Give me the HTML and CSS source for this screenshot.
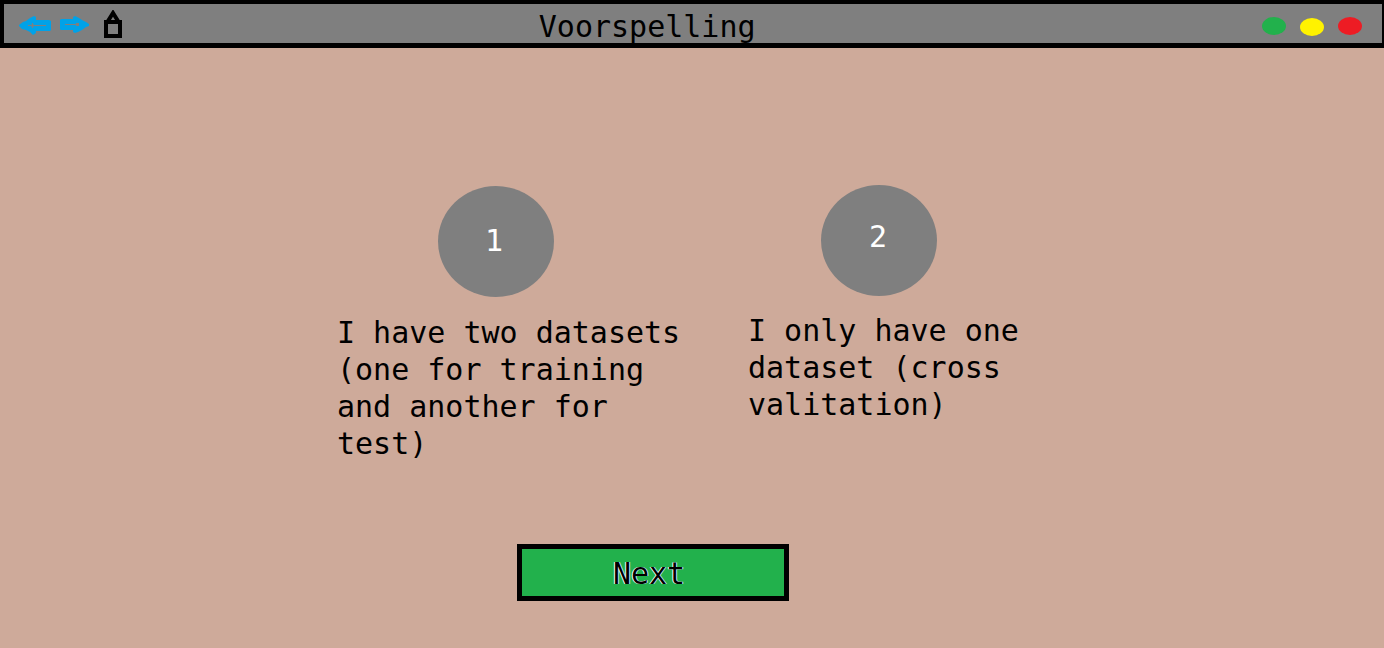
FILE: index.html
```html
<!DOCTYPE html>
<html lang="en">
<head>
<meta charset="utf-8">
<meta name="viewport" content="width=device-width, initial-scale=1">
<title>Voorspelling</title>
<link rel="stylesheet" href="styles.css">
</head>
<body>
<header class="titlebar">
  <nav class="nav">
    <button class="icon-button" type="button" aria-label="Back">
      <svg width="33" height="30" viewBox="0 0 33 30" aria-hidden="true">
        <path d="M0 15 L4 12 L7 11 L11 8 L15 6 L17 7 V10 H30 L32 11 V20 L31 21 H17 V23 L14 25 L11 22 L7 20 L3 19 L0 16Z" fill="#00a2e8"/>
        <path d="M9 15.500H27M13.500 13V18" stroke="#7f7f7f" fill="none"/>
        <path d="M11 15.500L13.500 14L16 15.500L13.500 17Z" fill="#7f7f7f"/>
      </svg>
    </button>
    <button class="icon-button" type="button" aria-label="Forward">
      <svg width="30" height="30" viewBox="0 0 30 30" aria-hidden="true">
        <path d="M1 9 H13 V7 L15 6 L19 8 L22 10 L26 12 L29 14 V16 L26 17 L22 20 L18 22 L15 23 L13 22 V20 H1 L0 19 V10Z" fill="#00a2e8"/>
        <path d="M5 14.500H17" stroke="#7f7f7f"/>
        <rect x="16" y="13" width="3" height="3" fill="#7f7f7f"/>
      </svg>
    </button>
    <button class="icon-button home" type="button" aria-label="Home">
      <svg width="18" height="30" viewBox="0 0 18 30" aria-hidden="true">
        <path d="M2 12H16V26H2Z" fill="none" stroke="#000" stroke-width="4"/>
        <path d="M4 11L9 3L14 11" fill="none" stroke="#000" stroke-width="4"/>
      </svg>
    </button>
  </nav>
  <h1 class="title">Voorspelling</h1>
  <div class="window-controls">
    <button class="dot dot-green" type="button" aria-label="Minimize"></button>
    <button class="dot dot-yellow" type="button" aria-label="Maximize"></button>
    <button class="dot dot-red" type="button" aria-label="Close"></button>
  </div>
</header>
<main class="content">
  <div class="options">
    <section class="option option-two-sets">
      <button class="circle" type="button" aria-describedby="two-sets">1</button>
      <p class="description" id="two-sets">I have two datasets (one for training and another for test)</p>
    </section>
    <section class="option option-one-set">
      <button class="circle" type="button" aria-describedby="one-set">2</button>
      <p class="description" id="one-set">I only have one dataset (cross valitation)</p>
    </section>
  </div>
  <button class="next" type="button">Next</button>
</main>
</body>
</html>
```
FILE: styles.css
```css
* {
  box-sizing: border-box;
}

body {
  margin: 0;
  min-height: 100vh;
  background: #ceaa9a;
  color: #000;
  font: 30px/37px "DejaVu Sans Mono", monospace;
}

button {
  border: 0;
  padding: 0;
  color: inherit;
  font: inherit;
  cursor: pointer;
}

.titlebar {
  display: grid;
  grid-template-columns: 6fr auto 7fr;
  align-items: center;
  height: 48px;
  padding: 0 20px 0 15px;
  background: #7f7f7f;
  border: solid #000;
  border-width: 4px 2px 5px 4px;
}

.nav {
  display: flex;
  align-items: center;
  gap: 8px;
}

.icon-button {
  display: flex;
  background: none;
}

.home {
  margin-left: 6px;
}

.title {
  margin: 0;
  padding-top: 4px;
  font: inherit;
}

.window-controls {
  display: flex;
  justify-content: flex-end;
  gap: 14px;
  padding-top: 4px;
}

.dot {
  width: 24px;
  height: 18px;
  border-radius: 50%;
}

.dot-green {
  background: #22b14c;
}

.dot-yellow {
  margin-top: 1px;
  background: #fff200;
}

.dot-red {
  background: #ed1c24;
}

.content {
  max-width: 710px;
  margin: 0 auto;
  padding: 137px 0 47px;
}

.options {
  display: grid;
  grid-template-columns: 411fr 299fr;
}

.option-two-sets {
  padding: 1px 60px 0 0;
}

.circle {
  display: block;
  width: 116px;
  height: 111px;
  margin-left: 101px;
  padding: 0 4px 3px 0;
  border-radius: 50%;
  background: #7f7f7f;
  color: #fff;
}

.option-one-set .circle {
  margin-left: 73px;
  padding: 0 2px 9px 0;
}

.description {
  margin: 17px 0 0;
}

.option-one-set .description {
  margin-top: 16px;
}

.next {
  display: block;
  width: 272px;
  margin: 82px 0 0 180px;
  padding: 6px 8px 4px 0;
  border: 5px solid #000;
  background: #22b14c;
  text-shadow: -1px 0 #fff, 1px 0 #b5e2ff;
}
```
